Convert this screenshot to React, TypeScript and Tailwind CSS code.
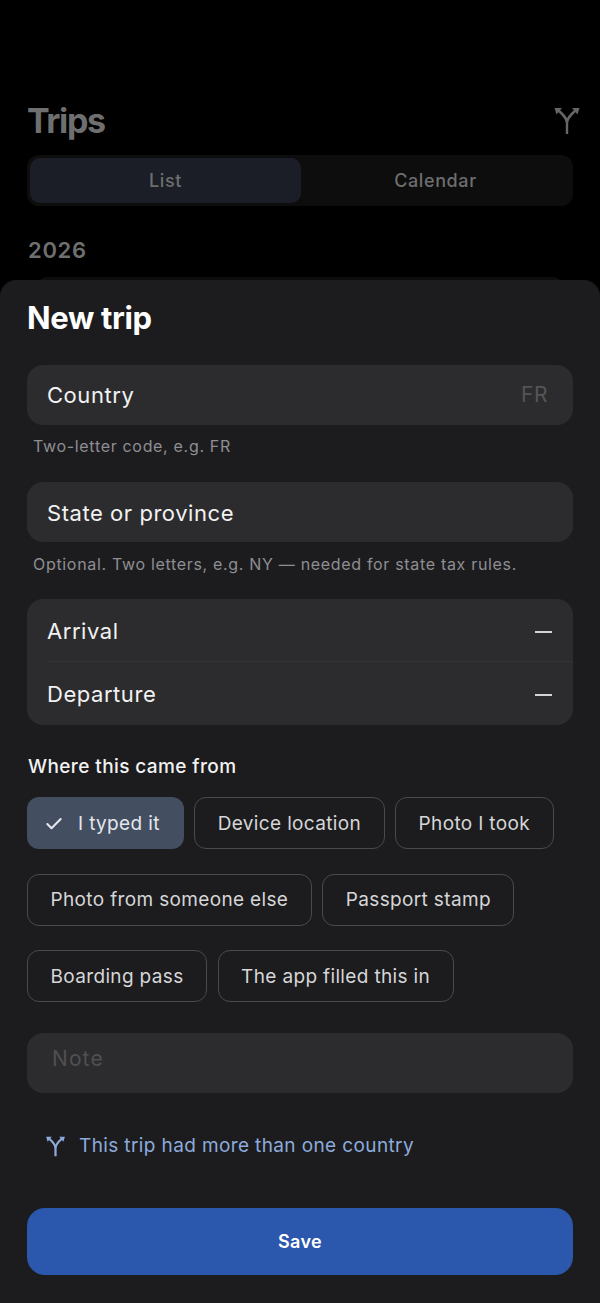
import { Check } from 'lucide-react';

const font = { fontFamily: 'Inter, sans-serif' };

function SplitIcon({ className, weight = 2.4 }: { className?: string; weight?: number }) {
    return (
        <svg viewBox="0 0 28 28" fill="none" stroke="currentColor" strokeWidth={weight} className={className}>
            <path d="M14 27V15.5C14 11.5 11 8.5 5 3" />
            <path d="M14 15.5C14 11.5 17 8.5 23 3" />
            <path d="M1.5 1h7.5l-5.5 6.5z" fill="currentColor" stroke="none" />
            <path d="M26.5 1H19l5.5 6.5z" fill="currentColor" stroke="none" />
        </svg>
    );
}

function Chip({ label, selected }: { label: string; selected?: boolean }) {
    if (selected) {
        return (
            <div className="flex h-[52px] items-center gap-[14px] rounded-[12px] bg-[#434e61] pl-[17px] pr-[24px] pt-[2px] text-[19px] tracking-[0.35px] text-[#e4e7ec]">
                <Check size={20} strokeWidth={2.5} />
                {label}
            </div>
        );
    }
    return (
        <div className="flex h-[52px] items-center rounded-[12px] border border-[#4a4a4d] px-[22.5px] pt-[2px] text-[19px] tracking-[0.35px] text-[#d6d6d8]">
            {label}
        </div>
    );
}

export default function App() {
    return (
        <div style={font} className="flex h-[1303px] w-[600px] flex-col overflow-hidden bg-black">
            {/* dimmed page behind the sheet */}
            <div className="h-[280px] shrink-0 overflow-hidden px-[27px] pt-[97px]">
                <div className="flex h-[47px] items-center justify-between">
                    <h1 className="text-[34px] font-bold tracking-[-1.4px] text-[#6f6f6f]">Trips</h1>
                    <SplitIcon className="mr-[-8px] h-[28px] w-[28px] text-[#666]" />
                </div>
                <div className="mt-[11px] flex h-[51px] rounded-[12px] bg-[#0d0d0d] p-[3px]">
                    <div className="flex w-[271px] items-center justify-center rounded-[10px] bg-[#1b1e26] text-[18px] font-medium tracking-[0.6px] text-[#6e6e70]">
                        List
                    </div>
                    <div className="flex flex-1 items-center justify-center text-[18px] font-medium tracking-[0.6px] text-[#6e6e70]">
                        Calendar
                    </div>
                </div>
                <div className="mt-[29px] pl-px text-[22px] leading-[30px] font-semibold tracking-[0.7px] text-[#6f6f6f]">2026</div>
                <div className="mx-[10px] mt-[12px] h-[10px] rounded-t-[12px] bg-[#0d0d0d]" />
            </div>

            <div className="flex-1 rounded-t-[16px] bg-[#1c1c1e] px-[27px] pt-[18px]">
                <h2 className="text-[31px] leading-[40px] font-bold tracking-[-0.35px] text-white">New trip</h2>

                <div className="mt-[27px] flex h-[60px] items-center justify-between rounded-[16px] bg-[#2c2c2e] pl-[20px] pr-[25px] text-[22px] tracking-[0.55px] text-[#f2f2f2]">
                    <span>Country</span>
                    <span className="text-[21px] text-[#555558]">FR</span>
                </div>
                <p className="mt-[10px] pl-[6px] text-[16px] leading-[22px] tracking-[0.68px] text-[#8e8e93]">Two-letter code, e.g. FR</p>

                <div className="mt-[25px] flex h-[60px] items-center rounded-[16px] bg-[#2c2c2e] px-[20px] pt-[2px] text-[22px] tracking-[0.55px] text-[#f2f2f2]">
                    State or province
                </div>
                <p className="mt-[11px] pl-[6px] text-[16px] leading-[22px] tracking-[0.68px] text-[#8e8e93]">
                    Optional. Two letters, e.g. NY — needed for state tax rules.
                </p>

                <div className="mt-[24px] rounded-[16px] bg-[#2c2c2e] pl-[20px] text-[22px] tracking-[0.55px] text-[#f2f2f2]">
                    <div className="flex h-[63px] items-center justify-between border-b border-[#333335] pr-[21px] pt-[2px]">
                        <span>Arrival</span>
                        <span className="mt-[2px] h-[2px] w-[17px] bg-[#d4d4d6]" />
                    </div>
                    <div className="flex h-[63px] items-center justify-between pr-[21px] pt-[1px]">
                        <span>Departure</span>
                        <span className="mt-[2px] h-[2px] w-[17px] bg-[#d4d4d6]" />
                    </div>
                </div>

                <div className="mt-[29px] pl-px text-[19px] leading-[26px] font-medium tracking-[0.4px] text-[#f2f2f2]">Where this came from</div>

                <div className="mt-[17px] flex flex-wrap gap-x-[10.5px] gap-y-[24.5px]">
                    <Chip label="I typed it" selected />
                    <Chip label="Device location" />
                    <Chip label="Photo I took" />
                    <Chip label="Photo from someone else" />
                    <Chip label="Passport stamp" />
                    <Chip label="Boarding pass" />
                    <Chip label="The app filled this in" />
                </div>

                <div className="mt-[31px] flex h-[60px] items-start rounded-[16px] bg-[#2c2c2e] px-[25px] pt-[10px] text-[21px] tracking-[1.1px] text-[#4f4f52]">
                    Note
                </div>

                <div className="mt-[39px] flex h-[28px] items-center gap-[13px] pl-[18px] text-[19px] tracking-[0.38px] text-[#8cabdc]">
                    <SplitIcon className="h-[21px] w-[21px]" weight={3} />
                    This trip had more than one country
                </div>

                <button className="mt-[48px] h-[67px] w-full rounded-[18px] bg-[#2b57ad] text-[18px] font-semibold tracking-[0.4px] text-white">
                    Save
                </button>
            </div>
        </div>
    );
}
